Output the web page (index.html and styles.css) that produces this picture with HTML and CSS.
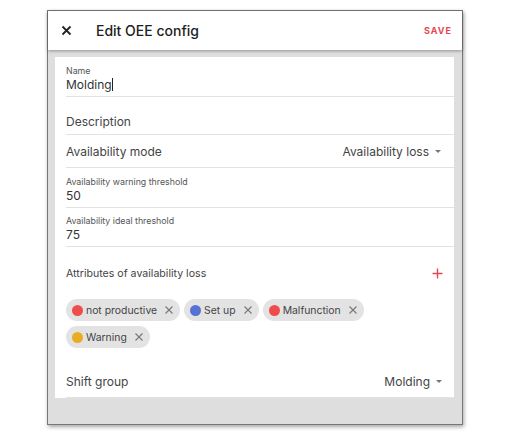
FILE: index.html
```html
<!DOCTYPE html>
<html>
<head>
<meta charset="utf-8">
<link rel="stylesheet" href="styles.css">
</head>
<body>
<div class="dialog">
  <header class="bar">
    <span class="close">
      <svg width="11" height="11" viewBox="0 0 11 11"><path d="M1.5 1.5L9.5 9.5M9.5 1.5L1.5 9.5" stroke="#222" stroke-width="1.8" fill="none"/></svg>
    </span>
    <span class="title">Edit OEE config</span>
    <span class="save">SAVE</span>
  </header>
  <div class="body">
    <div class="card">
      <div class="field stacked">
        <div class="label">Name</div>
        <div class="value">Molding<span class="caret"></span></div>
      </div>
      <div class="field single">
        <div class="placeholder">Description</div>
      </div>
      <div class="field select">
        <div class="text">Availability mode</div>
        <div class="choice">Availability loss <span class="tri"></span></div>
      </div>
      <div class="field stacked">
        <div class="label">Availability warning threshold</div>
        <div class="value">50</div>
      </div>
      <div class="field stacked short">
        <div class="label">Availability ideal threshold</div>
        <div class="value">75</div>
      </div>
      <div class="attrs">
        <div class="attrs-text">Attributes of availability loss</div>
        <svg class="plus" width="11" height="11" viewBox="0 0 11 11"><path d="M5.5 0.5V10.5M0.5 5.5H10.5" stroke="#e8474f" stroke-width="1.4"/></svg>
      </div>
      <div class="chips">
        <span class="chip"><span class="dot red"></span>not productive<svg class="x" width="8" height="8" viewBox="0 0 8 8"><path d="M0.5 0.5L7.5 7.5M7.5 0.5L0.5 7.5" stroke="#777" stroke-width="1.1"/></svg></span>
        <span class="chip"><span class="dot blue"></span>Set up<svg class="x" width="8" height="8" viewBox="0 0 8 8"><path d="M0.5 0.5L7.5 7.5M7.5 0.5L0.5 7.5" stroke="#777" stroke-width="1.1"/></svg></span>
        <span class="chip"><span class="dot red"></span>Malfunction<svg class="x" width="8" height="8" viewBox="0 0 8 8"><path d="M0.5 0.5L7.5 7.5M7.5 0.5L0.5 7.5" stroke="#777" stroke-width="1.1"/></svg></span>
        <span class="chip"><span class="dot yellow"></span>Warning<svg class="x" width="8" height="8" viewBox="0 0 8 8"><path d="M0.5 0.5L7.5 7.5M7.5 0.5L0.5 7.5" stroke="#777" stroke-width="1.1"/></svg></span>
      </div>
      <div class="field select last">
        <div class="text">Shift group</div>
        <div class="choice">Molding <span class="tri"></span></div>
      </div>
    </div>
  </div>
</div>
</body>
</html>
```
FILE: styles.css
```css
html, body {
  margin: 0;
  padding: 0;
  background: #fff;
}
body {
  font-family: "Inter", "Liberation Sans", sans-serif;
  color: #333;
  width: 510px;
  height: 445px;
  overflow: hidden;
}
.dialog {
  margin: 10px 0 0 47px;
  width: 414px;
  height: 413px;
  border: 1px solid #777;
  box-shadow: 1px 2px 4px rgba(0,0,0,0.35);
  background: #dedede;
  display: flex;
  flex-direction: column;
}
.bar {
  height: 39px;
  background: #fff;
  display: flex;
  align-items: center;
  padding: 0 10px 0 13px;
  box-shadow: 0 1px 3px rgba(0,0,0,0.35);
  position: relative;
  z-index: 1;
  flex-shrink: 0;
}
.close {
  display: flex;
  width: 11px;
  height: 11px;
}
.title {
  margin-left: 24px;
  font-size: 14px;
  font-weight: 500;
  color: #1e1e1e;
}
.save {
  margin-left: auto;
  color: #e8474f;
  font-size: 9px;
  font-weight: 700;
  letter-spacing: 1px;
}
.body {
  flex: 1;
  padding: 7px 8px 0 7px;
}
.card {
  background: #fff;
  height: 341px;
  padding-left: 11px;
  display: flex;
  flex-direction: column;
}
.field {
  border-bottom: 1px solid #e2e2e2;
  flex-shrink: 0;
}
.stacked {
  padding-top: 9px;
  height: 30px;
}
.stacked.short {
  padding-top: 8px;
}
.label {
  font-size: 8.8px;
  color: #555;
  line-height: 10px;
}
.value {
  font-size: 12px;
  color: #333;
  line-height: 16px;
  margin-top: 1px;
}
.caret {
  display: inline-block;
  width: 1px;
  height: 13px;
  background: #222;
  vertical-align: -2px;
}
.single {
  height: 38px;
  display: flex;
  align-items: flex-end;
  box-sizing: border-box;
}
.single .placeholder {
  line-height: 15px;
  margin-bottom: 5px;
}
.placeholder, .text {
  font-size: 12px;
  color: #444;
}
.select {
  height: 32px;
  display: flex;
  align-items: center;
  justify-content: space-between;
  padding-right: 13px;
}
.choice {
  font-size: 12px;
  color: #444;
  display: flex;
  align-items: center;
  gap: 4px;
}
.tri {
  width: 0;
  height: 0;
  border-left: 3px solid transparent;
  border-right: 3px solid transparent;
  border-top: 3.5px solid #777;
  margin-left: 2px;
}
.attrs {
  height: 52px;
  display: flex;
  align-items: center;
  justify-content: space-between;
  padding-right: 11px;
  flex-shrink: 0;
}
.attrs-text {
  font-size: 10.6px;
  color: #444;
}
.plus {
  display: block;
}
.chips {
  display: flex;
  flex-wrap: wrap;
  gap: 5px 4px;
  height: 49px;
  padding-right: 20px;
  align-content: flex-start;
  flex-shrink: 0;
}
.chip {
  height: 22px;
  border-radius: 11px;
  background: #e3e3e3;
  display: inline-flex;
  align-items: center;
  padding: 0 7px 0 6px;
  font-size: 10.4px;
  color: #444;
}
.dot {
  width: 11px;
  height: 11px;
  border-radius: 50%;
  margin-right: 3px;
}
.red { background: #ee4d4d; }
.blue { background: #5672d4; }
.yellow { background: #e9ad24; }
.x {
  display: block;
  margin-left: 8px;
}
.last {
  flex: 1;
  height: auto;
  padding-top: 18px;
  padding-right: 12px;
  border-bottom: 1px solid #e2e2e2;
}
```
